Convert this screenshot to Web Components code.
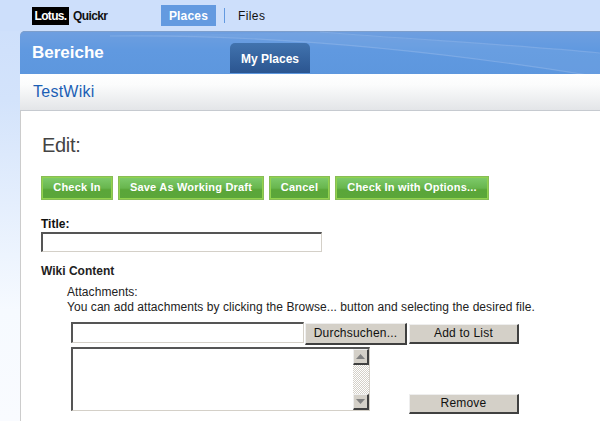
<!DOCTYPE html>
<html>
<head>
<meta charset="utf-8">
<title>Lotus Quickr</title>
<style>
  html, body { margin: 0; height: 421px; overflow: hidden; }
  body {
    background: linear-gradient(180deg, #cddffb 0, #d3e3fb 100px, #f6faff 310px, #f9fbff 100%);
    font-family: "Liberation Sans", Arial, sans-serif;
  }
</style>
</head>
<body>
<q-top-bar></q-top-bar>
<q-banner title-text="Bereiche" tab="My Places"></q-banner>
<q-sub-bar>TestWiki</q-sub-bar>
<q-content>
  <q-heading>Edit:</q-heading>
  <q-actions>
    <q-green-button style="width:72px">Check In</q-green-button>
    <q-green-button style="width:146px">Save As Working Draft</q-green-button>
    <q-green-button style="width:61px">Cancel</q-green-button>
    <q-green-button style="width:154px">Check In with Options...</q-green-button>
  </q-actions>
  <q-title-field></q-title-field>
  <q-attachments></q-attachments>
</q-content>

<script>
function define(name, html) {
  customElements.define(name, class extends HTMLElement {
    constructor() {
      super();
      this.attachShadow({ mode: 'open' });
      this.shadowRoot.innerHTML = html;
    }
  });
}

define('q-top-bar', `
  <style>
    :host { display: flex; height: 31px; box-sizing: border-box; padding: 5px 0 0 32px; align-items: flex-start; background: #cddffb; }
    .logo { display: flex; align-items: center; height: 18px; margin-top: 2px; width: 129px; }
    .lotus { background: #000; color: #fff; font: bold 12px "Liberation Sans", sans-serif; height: 18px; line-height: 18px; width: 37px; text-align: center; letter-spacing: -.7px; }
    .quickr { color: #111; font: bold 12px "Liberation Sans", sans-serif; margin-left: 4px; letter-spacing: -.6px; }
    .places { background: #639ae0; color: #fff; font: bold 12px "Liberation Sans", sans-serif; width: 55px; height: 21px; line-height: 22px; text-align: center; letter-spacing: .2px; }
    .sep { width: 1px; height: 15px; background: #639ae0; margin: 3px 13px 0 8px; }
    .files { font: 12px "Liberation Sans", sans-serif; line-height: 22px; color: #111; letter-spacing: .4px; }
  </style>
  <div class="logo"><span class="lotus">Lotus.</span><span class="quickr">Quickr</span></div>
  <div class="places">Places</div><div class="sep"></div><div class="files">Files</div>
`);

customElements.define('q-banner', class extends HTMLElement {
  constructor() {
    super();
    this.attachShadow({ mode: 'open' });
    this.shadowRoot.innerHTML = `
      <style>
        :host { display: flex; position: relative; height: 43px; margin-left: 20px; border-radius: 5px 0 0 0; overflow: hidden;
          background: linear-gradient(180deg, #6f9fe0 0, #6099e0 45%, #5d97de 100%); box-shadow: inset 0 1px 0 #7d9ecb; }
        h1 { margin: 0; padding: 12px 0 0 12px; width: 198px; font: bold 17px "Liberation Sans", sans-serif; color: #fff; }
        .tab { align-self: flex-end; margin-bottom: 1px; width: 80px; height: 30px; text-align: center; box-sizing: border-box;
          border-radius: 5px 5px 0 0; background: linear-gradient(180deg, #4173ae, #2b5590); color: #fff; font: bold 12px/33px "Liberation Sans", sans-serif; position: relative; }
        svg { position: absolute; left: 0; top: 0; }
      </style>
      <svg width="580" height="43" fill="none">
        <path d="M90 5 C250 3 420 20 580 46" stroke="#8fb6ea" stroke-opacity=".55" stroke-width="1.2"/>
        <path d="M300 1 C400 9 500 14 580 22" stroke="#8fb6ea" stroke-opacity=".5" stroke-width="1.2"/>
        <path d="M300 1 C400 9 500 14 580 22 L580 46 C420 20 250 3 90 5 Z" fill="#8fb6ea" fill-opacity=".18"/>
      </svg>
      <h1>${this.getAttribute('title-text')}</h1>
      <div class="tab">${this.getAttribute('tab')}</div>`;
  }
});

define('q-sub-bar', `
  <style>
    :host { display: block; height: 37px; margin-left: 20px; box-sizing: border-box; padding: 9px 0 0 13px;
      background: linear-gradient(180deg, #fff 0, #fbfcfc 30%, #e3e5e8 100%); border-bottom: 1px solid #c6cad0;
      font: 16px "Liberation Sans", sans-serif; color: #1c5fb5; letter-spacing: .25px; }
  </style>
  <slot></slot>
`);

define('q-content', `
  <style>
    :host { display: block; margin-left: 20px; height: 311px; box-sizing: border-box; background: #fff; border-left: 1px solid #ccc; padding: 0 0 0 20px; overflow: hidden; }
  </style>
  <slot></slot>
`);

define('q-heading', `
  <style>
    :host { display: block; margin: 23px 0 0 1px; font: 20px/23px "Liberation Sans", sans-serif; color: #444; letter-spacing: -.3px; }
  </style>
  <slot></slot>
`);

define('q-actions', `
  <style>
    :host { display: flex; gap: 5px; margin-top: 19px; }
  </style>
  <slot></slot>
`);

define('q-green-button', `
  <style>
    :host { display: block; box-sizing: border-box; height: 24px; border: 1px solid #87bd56; box-shadow: inset 0 0 0 1px #92d24e; text-align: center;
      background: linear-gradient(180deg, #7fcb6c 0, #68b64e 50%, #5aa639 58%, #5ba63a 100%);
      color: #fff; font: bold 11px/20px "Liberation Sans", sans-serif; letter-spacing: .2px; white-space: nowrap; }
  </style>
  <slot></slot>
`);

define('q-title-field', `
  <style>
    :host { display: block; margin-top: 18px; }
    label { display: block; margin-bottom: 2px; font: bold 12px/12px "Liberation Sans", sans-serif; color: #111; }
    .box { width: 281px; height: 20px; box-sizing: border-box; background: #fff; border: solid; border-color: #555 #d4d0c8 #d4d0c8 #555; border-width: 2px 1px 1px 2px; }
  </style>
  <label>Title:</label>
  <div class="box"></div>
`);

define('q-attachments', `
  <style>
    :host { display: block; margin-top: 12px; }
    h2 { margin: 0; font: bold 12px/14px "Liberation Sans", sans-serif; color: #222; }
    p { margin: 7px 0 0 26px; font: 12px/15px "Liberation Sans", sans-serif; color: #222; letter-spacing: .06px; }
    .row { display: flex; align-items: flex-start; margin: 7px 0 0 30px; }
    .sunken { box-sizing: border-box; background: #fff; border: solid; border-color: #555 #d4d0c8 #d4d0c8 #555; border-width: 2px 1px 1px 2px; }
    .file { height: 21px; width: 233px; }
    .raised { box-sizing: border-box; background: #d4d0c8; border: solid; border-color: #eee #404040 #404040 #eee; border-width: 1px 2px 2px 1px;
      font: 12px/18px "Liberation Sans", sans-serif; text-align: center; color: #111; letter-spacing: .2px; }
    .browse { width: 102px; height: 22px; margin: 1px 0 0 1px; }
    .add { width: 110px; height: 20px; line-height: 16px; margin: 2px 0 0 2px; }
    .lower { display: flex; margin: 2px 0 0 30px; align-items: flex-start; }
    .list { width: 299px; height: 64px; display: flex; justify-content: flex-end; }
    .bar { width: 16px; display: flex; flex-direction: column; justify-content: space-between; height: 61px;
      background: repeating-conic-gradient(#d4d0c8 0 25%, #fff 0 50%) 0 0 / 2px 2px; }
    .arrow { box-sizing: border-box; width: 16px; height: 16px; background: #d4d0c8; border: solid; border-color: #eee #404040 #404040 #eee; border-width: 1px 2px 2px 1px; display: flex; align-items: center; justify-content: center; }
    .remove { width: 110px; height: 20px; line-height: 16px; margin: 47px 0 0 39px; }
  </style>
  <h2>Wiki Content</h2>
  <p>Attachments:<br>You can add attachments by clicking the Browse... button and selecting the desired file.</p>
  <div class="row">
    <div class="sunken file"></div>
    <div class="raised browse">Durchsuchen...</div>
    <div class="raised add">Add to List</div>
  </div>
  <div class="lower">
    <div class="sunken list">
      <div class="bar">
        <div class="arrow"><svg width="9" height="5"><path d="M4.5 0 L9 5 H0 Z" fill="#808080"/></svg></div>
        <div class="arrow"><svg width="9" height="5"><path d="M0 0 H9 L4.5 5 Z" fill="#808080"/></svg></div>
      </div>
    </div>
    <div class="raised remove">Remove</div>
  </div>
`);
</script>
</body>
</html>
